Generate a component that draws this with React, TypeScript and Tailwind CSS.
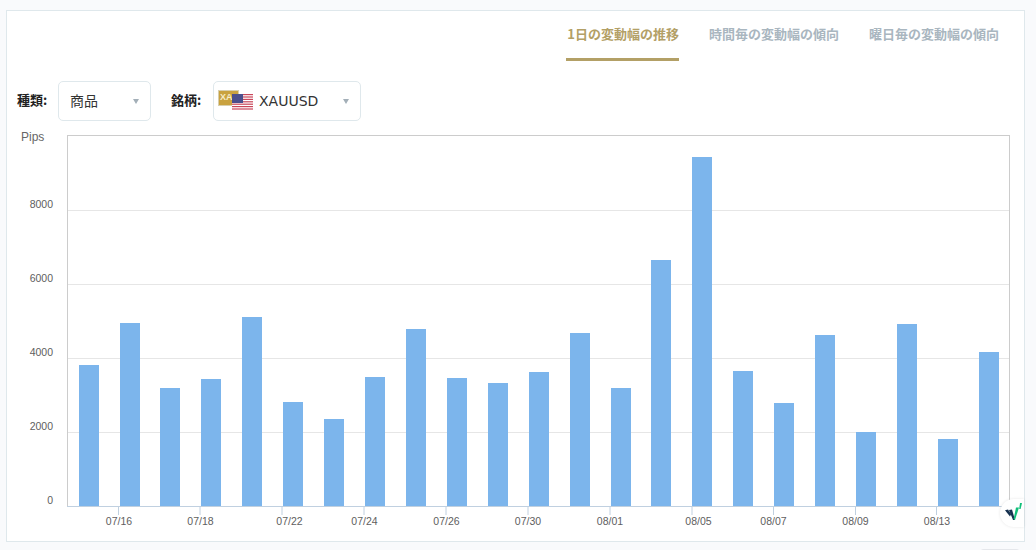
import React from "react";

const JP = "font-['Noto_Sans_CJK_JP','Liberation_Sans',sans-serif]";

const lefts = [79, 120, 160, 201, 242, 283, 324, 365, 406, 447, 488, 529, 570, 611, 651, 692, 733, 774, 815, 856, 897, 938, 979];
const tops = [365, 323, 388, 379, 317, 402, 419, 377, 329, 378, 383, 372, 333, 388, 260, 157, 371, 403, 335, 432, 324, 439, 352];
const ylabels: [string, number][] = [["8000", 210], ["6000", 284], ["4000", 358], ["2000", 432]];
const xlabels: [string, number, number][] = [
  ["07/16", 118.5, 119], ["07/18", 200, 200.5], ["07/22", 282, 289.5], ["07/24", 364, 364.5], ["07/26", 446, 446.5],
  ["07/30", 528, 528], ["08/01", 610, 610], ["08/05", 692, 698.5], ["08/07", 773.5, 773.5], ["08/09", 855.5, 855.5], ["08/13", 936.5, 937],
];

function Chart() {
  return (
    <svg width="1036" height="422" viewBox="0 128 1036 422" className="block font-['Liberation_Sans',sans-serif]">
      <text x="21" y="141" fontSize="12" fill="#666666">Pips</text>
      {ylabels.map(([t, y]) => (
        <g key={t}>
          <line x1="67" x2="1009" y1={y + 0.5} y2={y + 0.5} stroke="#e6e6e6" />
          <text x="53" y={y - 2.5} fontSize="10.5" fill="#606060" textAnchor="end">{t}</text>
        </g>
      ))}
      <text x="53" y="504" fontSize="10.5" fill="#606060" textAnchor="end">0</text>
      <rect x="67.5" y="135.5" width="942" height="371" fill="none" stroke="#cccccc" />
      {tops.map((t, i) => (
        <rect key={i} x={lefts[i]} y={t} width="20" height={506 - t} fill="#7cb5ec" />
      ))}
      <line x1="67" x2="1009" y1="506.5" y2="506.5" stroke="#c0d0e0" />
      {xlabels.map(([t, tick, c]) => (
        <g key={t}>
          <line x1={tick} x2={tick} y1="507" y2="515" stroke="#c0d0e0" />
          <text x={c} y="525" fontSize="10.5" fill="#606060" textAnchor="middle">{t}</text>
        </g>
      ))}
    </svg>
  );
}

function Flag() {
  const stripes = [0, 1, 2, 3, 4, 5, 6];
  return (
    <svg width="36" height="22" viewBox="0 0 36 22" className="shrink-0">
      <rect x="0.5" y="0.5" width="20" height="15" fill="#c9a23f" stroke="#d8cfae" />
      <text x="2" y="9.5" fontSize="9" fontWeight="700" fill="#f6ecc8" fontFamily="Liberation Sans, sans-serif">XAU</text>
      <rect x="14" y="4" width="21" height="16" fill="#ffffff" />
      {stripes.map((s) => (
        <rect key={s} x="14" y={4 + s * 2.4} width="21" height="1.2" fill="#c9475a" />
      ))}
      <rect x="14" y="4" width="11" height="9" fill="#4a4f8c" />
    </svg>
  );
}

function Caret() {
  return <span className="w-0 h-0 border-x-[3.5px] border-x-transparent border-t-[5px] border-t-[#a3afb8]" />;
}

export default function App() {
  return (
    <div className={`w-[1036px] h-[550px] overflow-hidden bg-[#f9fafc] pt-[10px] pl-[6px] ${JP}`}>
      <div className="relative w-[1019px] h-[532px] bg-white border border-[#dfe8ec] box-border">
        <div className="flex justify-end gap-[30px] pr-[25px] h-[50px] text-[13px] font-bold leading-[45px] text-[#a9b6bf]">
          <div className="h-[50px] pl-[1px] border-b-[3px] border-[#b3a066] text-[#b3a066]">1日の変動幅の推移</div>
          <div>時間毎の変動幅の傾向</div>
          <div>曜日毎の変動幅の傾向</div>
        </div>
        <div className="flex items-center h-[40px] mt-[20px] pl-[10px] text-[13px] font-bold text-[#222222]">
          <span className="w-[41px] -mt-[3px]">種類:</span>
          <div className="flex items-center justify-between w-[93px] h-[40px] rounded-[5px] border border-[#dfe8ec] pl-[11px] pr-[11px] text-[14px] font-normal text-[#333333]">
            <span className="-mt-[2px]">商品</span>
            <Caret />
          </div>
          <span className="ml-[20px] w-[42px] -mt-[3px]">銘柄:</span>
          <div className="flex items-center w-[148px] h-[40px] rounded-[5px] border border-[#dfe8ec] pl-[4px] pr-[11px] text-[14px] font-normal text-[#333333]">
            <Flag />
            <span className="ml-[5px] font-['DejaVu_Sans',sans-serif] text-[14px]">XAUUSD</span>
            <span className="ml-auto flex"><Caret /></span>
          </div>
        </div>
      </div>
      <div className="absolute left-0 top-[128px]">
        <Chart />
      </div>
      <div className="absolute left-[1000px] top-[499px] w-[24px] h-[28px] bg-white rounded-l-full shadow-[0_0_3px_rgba(0,0,0,0.1)] pl-[5px] pt-[4px]">
        <svg width="17" height="18" viewBox="0 0 17 18" className="block">
          <path d="M0 7.2 L3 6.5 L6.2 11 L5 13.5Z" fill="#16314f" />
          <path d="M4 7 L7 6.5 L10 17 L8 17Z" fill="#16314f" />
          <path d="M8.6 16 L11 4.5 L14 4.5 L10 17Z" fill="#10c07a" />
          <path d="M14.2 6 L15 0 L17 0 L15.6 6Z" fill="#10c07a" />
        </svg>
      </div>
      <div className="absolute left-[980px] top-[549px] w-[40px] h-[4px] rounded-t-[4px] bg-white border border-[#e5e7eb]" />
    </div>
  );
}
